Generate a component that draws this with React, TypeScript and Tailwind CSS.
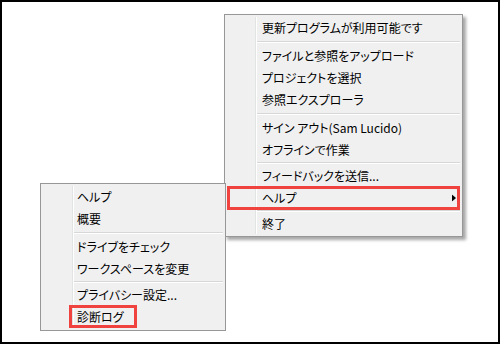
import React from "react";

type Entry = { type: "item"; label: string; arrow?: boolean; box?: boolean } | { type: "sep"; h: number };

const fontStyle = "[font-family:'Noto_Sans_CJK_JP','Noto_Sans',sans-serif] [font-feature-settings:'palt'] text-[12px] text-black";

function Item({ label, arrow, box, pl, h = 22 }: { label: string; arrow?: boolean; box?: boolean; pl: string; h?: number }) {
  return (
    <div className={`relative flex items-center ${pl} pr-2`} style={{ height: h }}>
      <span className="leading-none whitespace-nowrap">{label}</span>
      {arrow && (
        <svg className="absolute right-[6px] top-1/2 -translate-y-1/2" width="4" height="7" viewBox="0 0 4 7">
          <path d="M0 0 L4 3.5 L0 7 Z" fill="#000" />
        </svg>
      )}
      {box && <div className="absolute left-[2px] right-[2px] -top-[1px] -bottom-[1px] border-[3px] border-[#f0423f]" />}
    </div>
  );
}

function Sep({ h, ml }: { h: number; ml: string }) {
  return (
    <div className={`flex flex-col justify-center ${ml} mr-[2px]`} style={{ height: h }}>
      <div className="h-px bg-[#d7d7d7]" />
      <div className="h-px bg-white" />
    </div>
  );
}

export default function App() {
  const main: Entry[] = [
    { type: "item", label: "更新プログラムが利用可能です" },
    { type: "sep", h: 6 },
    { type: "item", label: "ファイルと参照をアップロード" },
    { type: "item", label: "プロジェクトを選択" },
    { type: "item", label: "参照エクスプローラ" },
    { type: "sep", h: 6 },
    { type: "item", label: "サイン アウト(Sam Lucido)" },
    { type: "item", label: "オフラインで作業" },
    { type: "sep", h: 4 },
    { type: "item", label: "フィードバックを送信..." },
    { type: "item", label: "ヘルプ", arrow: true, box: true },
    { type: "sep", h: 4 },
    { type: "item", label: "終了" },
  ];
  const sub: Entry[] = [
    { type: "item", label: "ヘルプ" },
    { type: "item", label: "概要" },
    { type: "sep", h: 6 },
    { type: "item", label: "ドライブをチェック" },
    { type: "item", label: "ワークスペースを変更" },
    { type: "sep", h: 4 },
    { type: "item", label: "プライバシー設定..." },
    { type: "item", label: "診断ログ" },
  ];
  return (
    <div className={`relative w-[500px] h-[344px] border-2 border-black bg-white overflow-hidden ${fontStyle}`}>
      {/* main menu */}
      <div className="absolute left-[222px] top-[12px] w-[239px] h-[223px] border border-[#979797] bg-[#f0f0f0] py-[2px] shadow-[3px_3px_3px_rgba(0,0,0,0.35)]">
        <div className="absolute left-[30px] top-[2px] bottom-[2px] w-[2px] flex">
          <div className="w-px bg-[#e2e3e3]" />
          <div className="w-px bg-white" />
        </div>
        {main.map((e, i) =>
          e.type === "item" ? (
            <Item key={i} label={e.label} arrow={e.arrow} box={e.box} pl="pl-[37px]" />
          ) : (
            <Sep key={i} h={e.h} ml="ml-[32px]" />
          )
        )}
      </div>
      {/* sub menu */}
      <div className="absolute left-[38px] top-[181px] w-[186px] h-[148px] border border-[#979797] bg-[#f0f0f0] pt-[2px]">
        <div className="absolute left-[31px] top-[2px] bottom-[2px] w-[2px] flex">
          <div className="w-px bg-[#e2e3e3]" />
          <div className="w-px bg-white" />
        </div>
        {sub.map((e, i) =>
          e.type === "item" ? (
            <div key={i} className="relative">
              <Item label={e.label} pl="pl-[36px]" />
              {i === sub.length - 1 && (
                <div className="absolute left-[28px] w-[68px] top-[-1px] h-[23px] border-[3px] border-[#f0423f]" />
              )}
            </div>
          ) : (
            <Sep key={i} h={e.h} ml="ml-[33px]" />
          )
        )}
      </div>
    </div>
  );
}
